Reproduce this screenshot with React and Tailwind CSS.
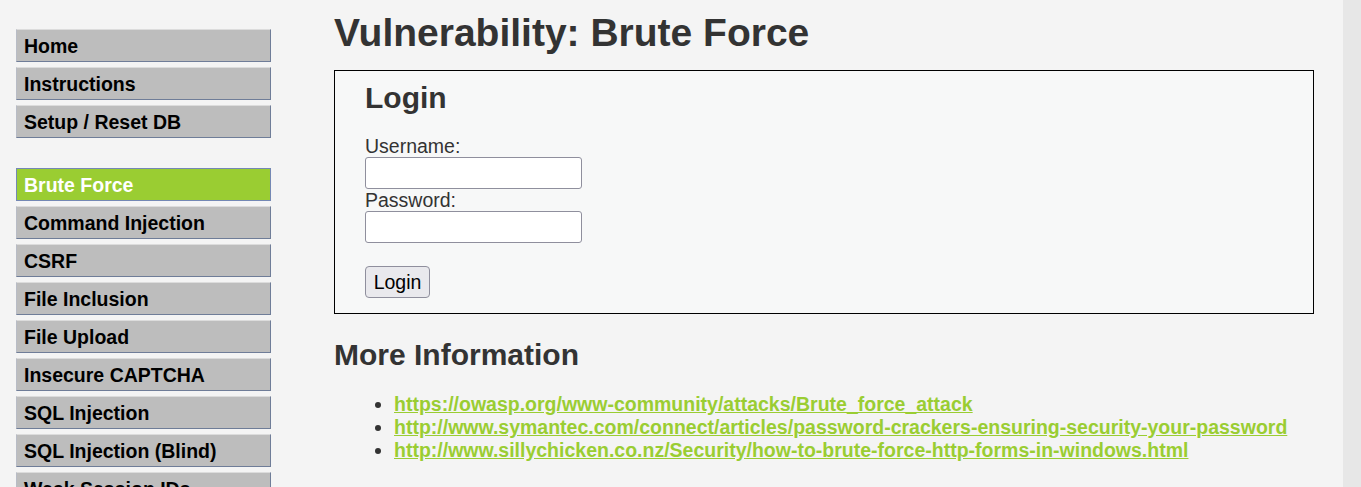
import React from "react";

const group1 = ["Home", "Instructions", "Setup / Reset DB"];
const group2 = [
  "Brute Force",
  "Command Injection",
  "CSRF",
  "File Inclusion",
  "File Upload",
  "Insecure CAPTCHA",
  "SQL Injection",
  "SQL Injection (Blind)",
  "Weak Session IDs",
  "XSS (DOM)",
  "XSS (Reflected)",
];

function MenuItem({ label, active }) {
  return (
    <li>
      <a
        href="#"
        className={
          active
            ? "flex h-[33px] items-center border border-[#7488b4] bg-[#9acd32] pl-[7px] pt-[1px] text-[19.5px] font-bold leading-[22px] text-white no-underline"
            : "flex h-[33px] items-center border border-t-[#dcdcdc] border-l-[#b8bcc6] border-r-[#6f7d98] border-b-[#6f7d98] bg-[#bdbdbd] pl-[7px] pt-[1px] text-[19.5px] font-bold leading-[22px] text-black no-underline"
        }
      >
        {label}
      </a>
    </li>
  );
}

const links = [
  "https://owasp.org/www-community/attacks/Brute_force_attack",
  "http://www.symantec.com/connect/articles/password-crackers-ensuring-security-your-password",
  "http://www.sillychicken.co.nz/Security/how-to-brute-force-http-forms-in-windows.html",
];

export default function App() {
  return (
    <div
      className="flex h-[487px] overflow-hidden bg-[#f4f4f4] text-[#333333]"
      style={{ fontFamily: '"Liberation Sans", Arial, sans-serif' }}
    >
      <div className="flex w-[1343px] shrink-0">
        <nav className="w-[255px] shrink-0 ml-[16px] pt-[29px]">
          <ul className="flex flex-col gap-[5px]">
            {group1.map((l) => (
              <MenuItem key={l} label={l} />
            ))}
          </ul>
          <ul className="mt-[30px] flex flex-col gap-[5px]">
            {group2.map((l) => (
              <MenuItem key={l} label={l} active={l === "Brute Force"} />
            ))}
          </ul>
        </nav>

        <main className="ml-[63px] w-[980px] shrink-0 pt-[10px]">
          <h1 className="text-[39px] font-bold leading-[45px] text-[#333333]">
            Vulnerability: Brute Force
          </h1>

          <div className="mt-[15px] h-[244px] border border-black bg-[#f7f8f8] pl-[30px] pt-[10px]">
            <h2 className="text-[30px] font-bold leading-[34px] text-[#333333]">Login</h2>
            <form className="mt-[20px] flex flex-col items-start text-[19.5px] leading-[22px] text-[#333333]">
              <label className="block">Username:</label>
              <input
                type="text"
                className="h-[32px] w-[217px] rounded-[3px] border border-[#8f8f9d] bg-white"
              />
              <label className="block">Password:</label>
              <input
                type="password"
                className="h-[32px] w-[217px] rounded-[3px] border border-[#8f8f9d] bg-white"
              />
              <button
                type="button"
                className="mt-[23px] h-[32px] w-[65px] rounded-[4px] border border-[#8f8f9d] bg-[#e9e9ed] text-[19.5px] leading-[22px] text-black"
              >
                Login
              </button>
            </form>
          </div>

          <h2 className="mt-[24px] text-[30px] font-bold leading-[34px] text-[#333333]">
            More Information
          </h2>
          <ul className="mt-[21px] list-disc pl-[60px] text-[19.5px] leading-[23px] marker:text-[#333333]">
            {links.map((l) => (
              <li key={l}>
                <a
                  href="#"
                  className="font-bold text-[#9acd32] underline decoration-[#9acd32]"
                >
                  {l}
                </a>
              </li>
            ))}
          </ul>
        </main>
      </div>
      <div className="flex-1 bg-[#e7e7e7]" />
    </div>
  );
}
